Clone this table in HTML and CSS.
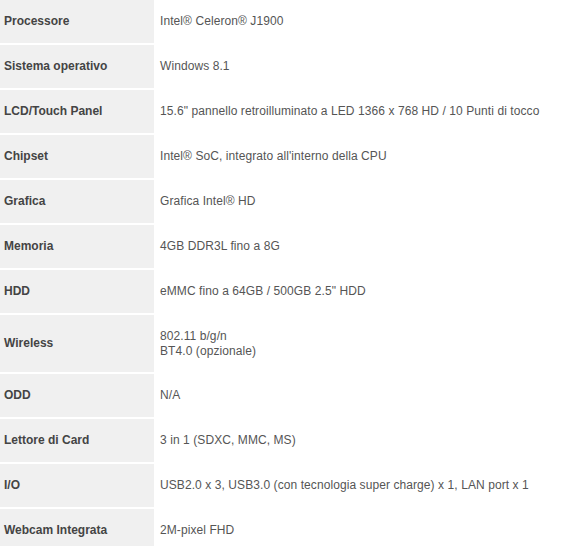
FILE: index.html
```html
<!DOCTYPE html>
<html lang="it">
<head>
<meta charset="utf-8">
<title>Specifiche</title>
<link rel="stylesheet" href="styles.css">
</head>
<body>
<div class="specs">
  <div class="row"><div class="label">Processore</div><div class="value">Intel® Celeron® J1900</div></div>
  <div class="row"><div class="label">Sistema operativo</div><div class="value">Windows 8.1</div></div>
  <div class="row"><div class="label">LCD/Touch Panel</div><div class="value">15.6" pannello retroilluminato a LED 1366 x 768 HD / 10 Punti di tocco</div></div>
  <div class="row"><div class="label">Chipset</div><div class="value">Intel® SoC, integrato all'interno della CPU</div></div>
  <div class="row"><div class="label">Grafica</div><div class="value">Grafica Intel® HD</div></div>
  <div class="row"><div class="label">Memoria</div><div class="value">4GB DDR3L fino a 8G</div></div>
  <div class="row"><div class="label">HDD</div><div class="value">eMMC fino a 64GB / 500GB 2.5" HDD</div></div>
  <div class="row tall"><div class="label">Wireless</div><div class="value">802.11 b/g/n<br>BT4.0 (opzionale)</div></div>
  <div class="row"><div class="label">ODD</div><div class="value">N/A</div></div>
  <div class="row"><div class="label">Lettore di Card</div><div class="value">3 in 1 (SDXC, MMC, MS)</div></div>
  <div class="row"><div class="label">I/O</div><div class="value">USB2.0 x 3, USB3.0 (con tecnologia super charge) x 1, LAN port x 1</div></div>
  <div class="row"><div class="label">Webcam Integrata</div><div class="value">2M-pixel FHD</div></div>
</div>
</body>
</html>
```
FILE: styles.css
```css
html, body {
  margin: 0;
  padding: 0;
  background: #ffffff;
}
body {
  font-family: "Liberation Sans", Arial, sans-serif;
  font-size: 12px;
  line-height: 15px;
}
.specs {
  display: flex;
  flex-direction: column;
}
.row {
  display: flex;
  min-height: 43px;
  border-bottom: 2px solid #ffffff;
}
.row.tall {
  min-height: 57px;
}
.label {
  width: 150px;
  flex: none;
  padding-left: 4px;
  background: #f0f0f0;
  color: #444444;
  font-weight: bold;
  display: flex;
  align-items: center;
}
.value {
  padding-left: 6px;
  color: #555555;
  letter-spacing: 0.08px;
  display: flex;
  flex-direction: column;
  justify-content: center;
}
```
